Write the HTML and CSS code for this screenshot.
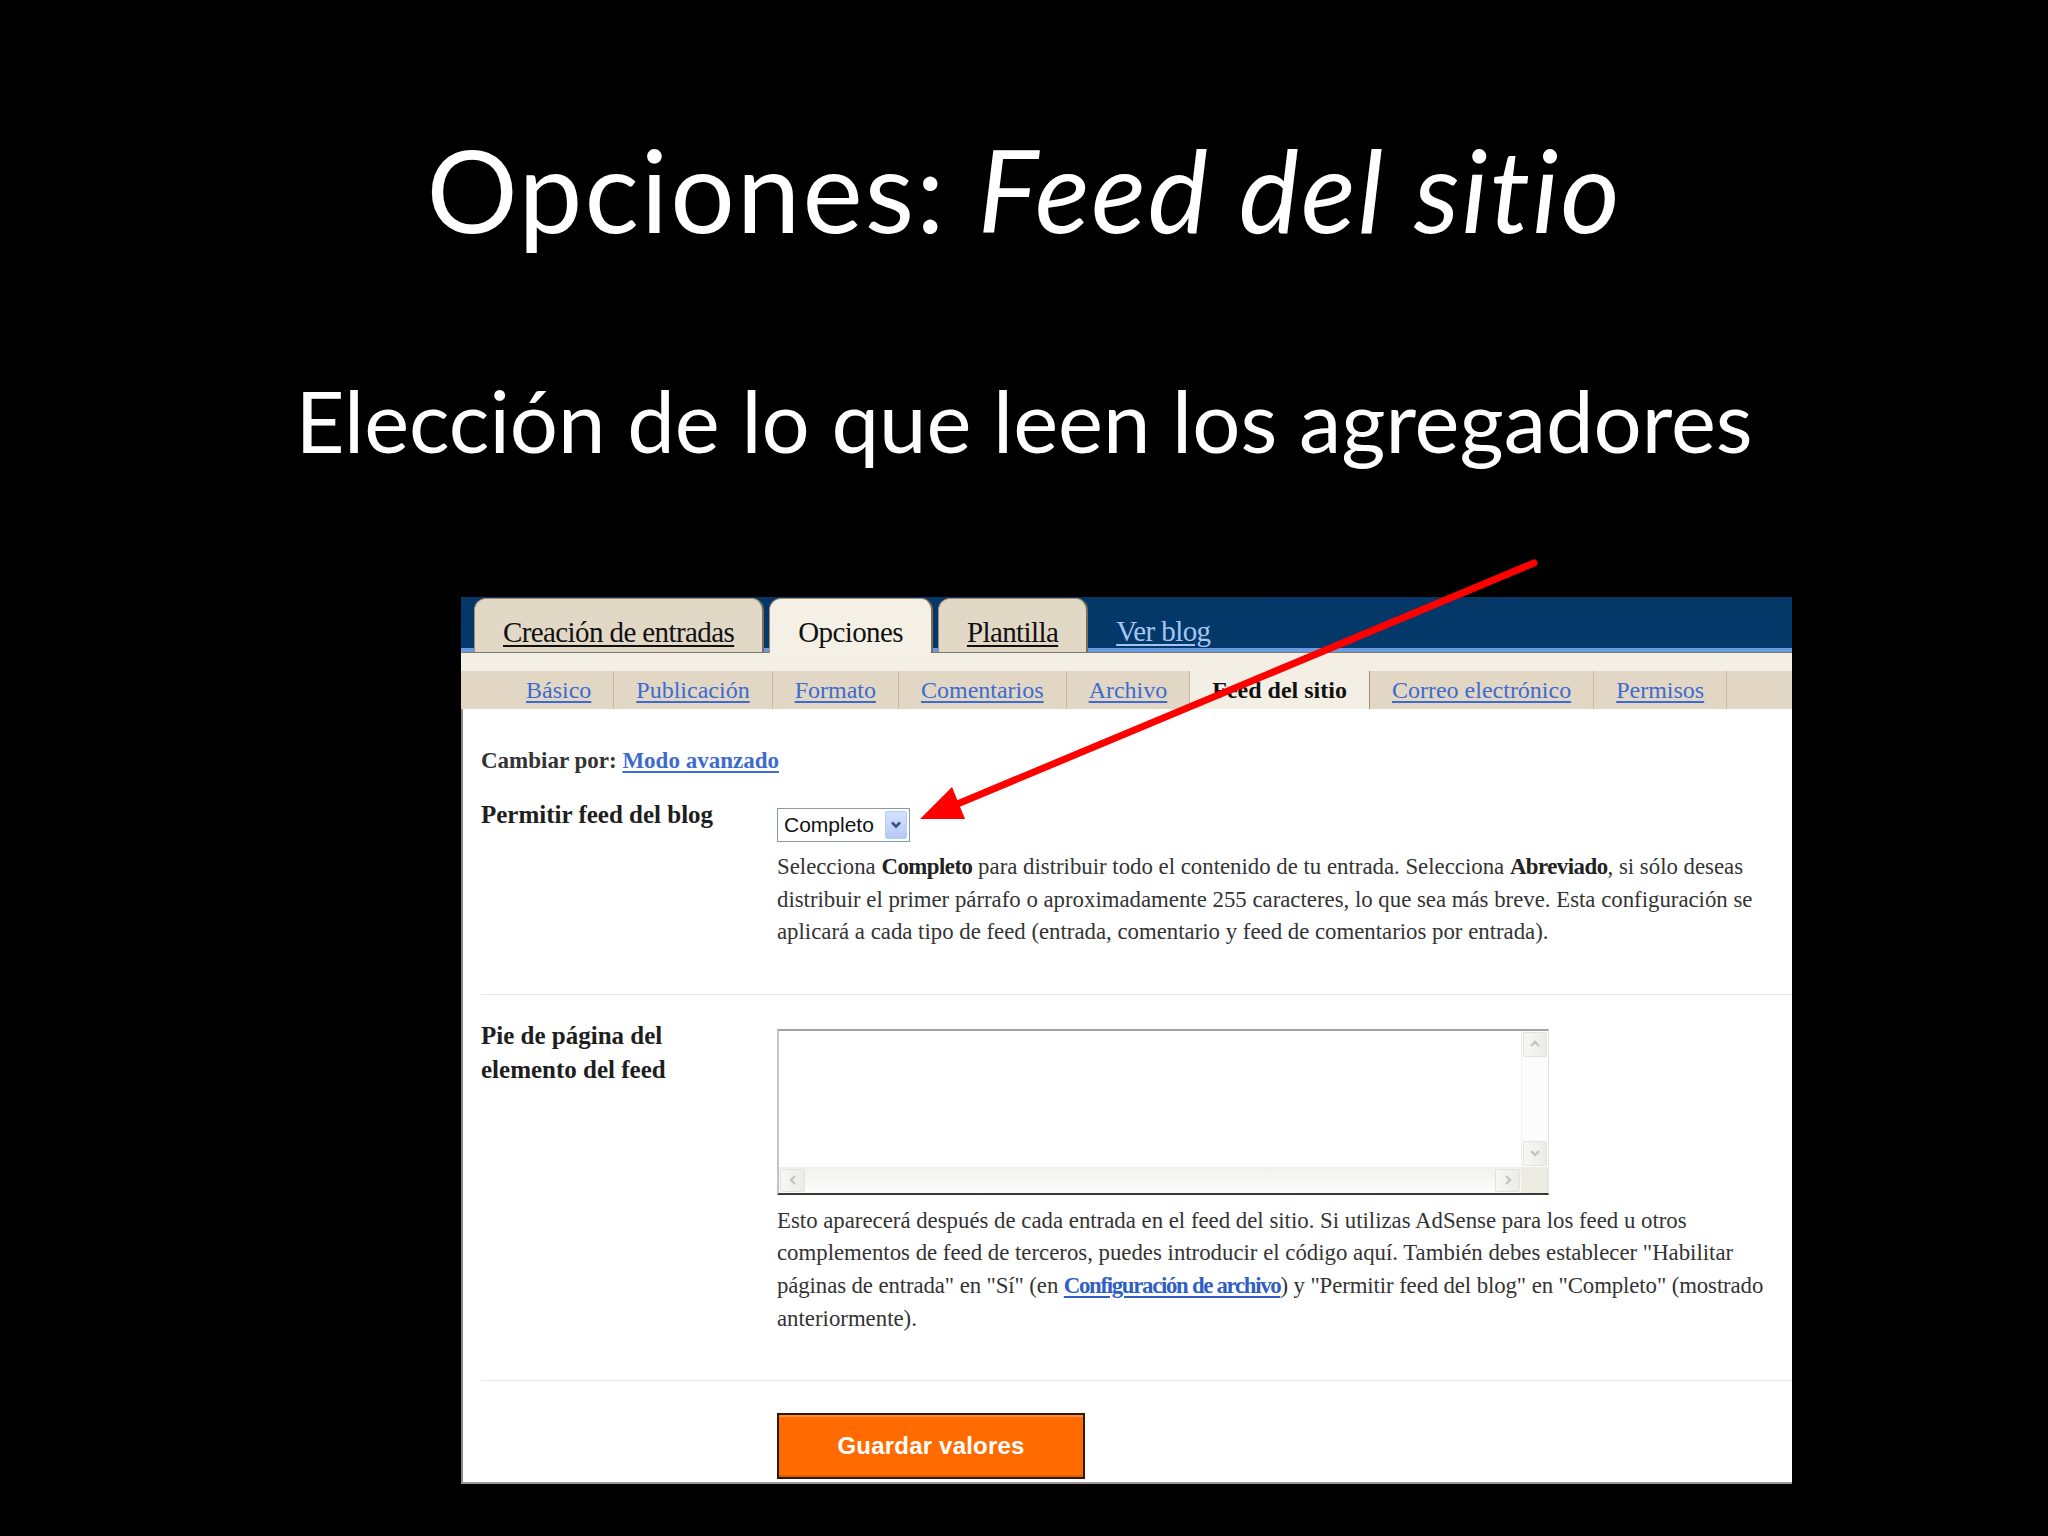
FILE: index.html
```html
<!DOCTYPE html>
<html lang="es">
<head>
<meta charset="utf-8">
<title>Opciones: Feed del sitio</title>
<link rel="stylesheet" href="styles.css">
</head>
<body>
<div class="slide">
  <h1 class="title">Opciones: <em>Feed del sitio</em></h1>
  <p class="subtitle">Elección de lo que leen los agregadores</p>

  <div class="shot">
    <div class="topbar">
      <a class="tab">Creación de entradas</a>
      <span class="tab active">Opciones</span>
      <a class="tab">Plantilla</a>
      <a class="viewblog">Ver blog</a>
    </div>
    <div class="subbar">
      <div class="subtabs">
        <a class="stab">Básico</a>
        <a class="stab">Publicación</a>
        <a class="stab">Formato</a>
        <a class="stab">Comentarios</a>
        <a class="stab">Archivo</a>
        <span class="stab active">Feed del sitio</span>
        <a class="stab">Correo electrónico</a>
        <a class="stab">Permisos</a>
      </div>
    </div>

    <div class="content">
      <p class="switch"><b>Cambiar por:</b> <a>Modo avanzado</a></p>

      <div class="row r1">
        <div class="label">Permitir feed del blog</div>
        <div class="field">
          <div class="select">
            <span class="sel-text">Completo</span>
            <span class="dd"><svg width="14" height="12" viewBox="0 0 14 12"><polyline points="3,3.5 7,7.5 11,3.5" fill="none" stroke="#3f5685" stroke-width="2.8"/></svg></span>
          </div>
          <p class="help">Selecciona <b>Completo</b> para distribuir todo el contenido de tu entrada. Selecciona <b>Abreviado</b>, si sólo deseas<br>distribuir el primer párrafo o aproximadamente 255 caracteres, lo que sea más breve. Esta configuración se<br>aplicará a cada tipo de feed (entrada, comentario y feed de comentarios por entrada).</p>
        </div>
      </div>

      <hr class="sep">

      <div class="row r2">
        <div class="label tall">Pie de página del<br>elemento del feed</div>
        <div class="field">
          <div class="textarea">
            <div class="ta-body"></div>
            <div class="vbar">
              <span class="sbtn"><svg width="14" height="10" viewBox="0 0 14 10"><polyline points="3,7 7,3 11,7" fill="none" stroke="#c4c4c0" stroke-width="2.4"/></svg></span>
              <span class="vtrack"></span>
              <span class="sbtn"><svg width="14" height="10" viewBox="0 0 14 10"><polyline points="3,3 7,7 11,3" fill="none" stroke="#c4c4c0" stroke-width="2.4"/></svg></span>
            </div>
            <div class="hbar">
              <span class="sbtn h"><svg width="10" height="14" viewBox="0 0 10 14"><polyline points="7,3 3,7 7,11" fill="none" stroke="#c4c4c0" stroke-width="2.4"/></svg></span>
              <span class="htrack"></span>
              <span class="sbtn h"><svg width="10" height="14" viewBox="0 0 10 14"><polyline points="3,3 7,7 3,11" fill="none" stroke="#c4c4c0" stroke-width="2.4"/></svg></span>
            </div>
            <div class="corner"></div>
          </div>
          <p class="help h2">Esto aparecerá después de cada entrada en el feed del sitio. Si utilizas AdSense para los feed u otros<br>complementos de feed de terceros, puedes introducir el código aquí. También debes establecer "Habilitar<br><span class="tight">páginas de entrada" en "Sí" (en <a class="blink">Configuración de archivo</a>) y "Permitir feed del blog" en "Completo" (mostrado</span><br>anteriormente).</p>
        </div>
      </div>

      <hr class="sep">

      <div class="actions">
        <button class="save" type="button">Guardar valores</button>
      </div>
    </div>
  </div>

  <svg class="arrow" width="2048" height="1536" viewBox="0 0 2048 1536">
    <line x1="1534" y1="563" x2="955" y2="805" stroke="#ff0000" stroke-width="7" stroke-linecap="round"/>
    <polygon points="920,819 965,819 952,787" fill="#ff0000"/>
  </svg>
</div>
</body>
</html>
```

FILE: styles.css
```css
html, body {
  margin: 0;
  padding: 0;
  background: #000;
}

.slide {
  position: relative;
  width: 2048px;
  height: 1536px;
  background: #000;
  overflow: hidden;
}

.title {
  margin: 0;
  padding-top: 120px;
  font-family: Lato, "Open Sans", sans-serif;
  font-weight: 400;
  font-size: 114px;
  line-height: 137px;
  letter-spacing: 2px;
  font-variant-ligatures: none;
  text-align: center;
  color: #fff;
}

.title em {
  font-style: italic;
}

.subtitle {
  margin: 112px 0 0;
  font-family: Lato, "Open Sans", sans-serif;
  font-size: 85px;
  line-height: 102px;
  font-variant-ligatures: none;
  text-align: center;
  color: #fff;
}

/* ---------- screenshot panel ---------- */
.shot {
  margin-top: 126px;
  margin-left: 461px;
  width: 1331px;
  font-family: "Liberation Serif", "Times New Roman", serif;
}

.topbar {
  display: flex;
  align-items: flex-start;
  height: 56px;
  padding-left: 13px;
  gap: 5px;
  box-sizing: border-box;
  background: linear-gradient(to bottom, #043766 0, #04396b 51px, #6a9be0 51px, #6a9be0 55px, #7d7a72 55px, #7d7a72 56px);
}

.tab {
  margin-top: 1px;
  height: 54px;
  box-sizing: border-box;
  padding: 18px 28px 0;
  border: 1px solid #9b8d77;
  border-right: 2px solid #7a6d5a;
  border-bottom: none;
  border-radius: 12px 12px 0 0;
  background: #e2d8c6;
  font-size: 29px;
  letter-spacing: -0.6px;
  line-height: 30px;
  color: #111;
  text-decoration: underline;
  text-underline-offset: 3px;
}

.tab.active {
  height: 55px;
  background: #f5f0e6;
  text-decoration: none;
  color: #111;
}

.viewblog {
  margin-left: 23px;
  padding-top: 19px;
  font-size: 29px;
  letter-spacing: -0.6px;
  line-height: 30px;
  color: #a3c6f4;
  text-decoration: underline;
  text-underline-offset: 3px;
}

.subbar {
  background: #f4efe4;
  padding-top: 18px;
}

.subtabs {
  display: flex;
  height: 38px;
  padding-left: 43px;
  background: #e1d7c4;
}

.stab {
  padding: 0 22px;
  border-right: 1px solid #c7b99f;
  font-size: 24px;
  line-height: 38px;
  color: #3d6bd0;
  text-decoration: underline;
  text-underline-offset: 3px;
  white-space: nowrap;
}

.stab.active {
  background: #f4efe4;
  border-right: 1px solid #9e8f77;
  font-weight: 700;
  color: #111;
  text-decoration: none;
}

/* ---------- content ---------- */
.content {
  background: #fff;
  border-left: 2px solid #8a8a8a;
  border-bottom: 2px solid #9a9a9a;
  padding: 0 0 3px 18px;
  color: #333;
}

.switch {
  margin: 0;
  padding-top: 37px;
  font-size: 23px;
  line-height: 30px;
  font-weight: 700;
  color: #333;
}

.switch a {
  color: #3d6bd0;
  text-decoration: underline;
  text-underline-offset: 3px;
}

.row {
  display: grid;
  grid-template-columns: 296px 1fr;
}

.r1 {
  margin-top: 24px;
}

.r2 {
  margin-top: 24px;
}

.label {
  font-size: 25px;
  font-weight: 700;
  line-height: 30px;
  color: #1e1e1e;
}

.label.tall {
  line-height: 34px;
}

.select {
  display: flex;
  align-items: center;
  margin-top: 8px;
  width: 133px;
  height: 34px;
  box-sizing: border-box;
  border: 1px solid #7f9db9;
  background: #fff;
  padding-left: 6px;
}

.sel-text {
  font-family: "Liberation Sans", Arial, sans-serif;
  font-size: 21px;
  color: #111;
}

.dd {
  margin-left: auto;
  margin-right: 2px;
  width: 22px;
  height: 28px;
  box-sizing: border-box;
  display: flex;
  align-items: center;
  justify-content: center;
  border: 1px solid #b9cbf3;
  border-radius: 2px;
  background: linear-gradient(to bottom, #d4e0fd, #b6c9f6);
}

.help {
  margin: 9px 0 0;
  padding-bottom: 45px;
  font-size: 22.8px;
  line-height: 32.5px;
  color: #333;
  white-space: nowrap;
}

.help b {
  color: #222;
  letter-spacing: -0.5px;
}

.help.h2 {
  margin-top: 10px;
  line-height: 32.7px;
}

.tight {
  letter-spacing: -0.1px;
}

.blink {
  color: #2f5fc4;
  font-weight: 700;
  letter-spacing: -1.3px;
  text-decoration: underline;
  text-underline-offset: 3px;
}

.sep {
  margin: 0;
  border: 0;
  height: 1px;
  background: #e6e6e6;
}

/* fake textarea */
.textarea {
  margin-top: 10px;
  width: 772px;
  height: 166px;
  box-sizing: border-box;
  display: grid;
  grid-template-columns: 1fr 27px;
  grid-template-rows: 1fr 26px;
  border-top: 2px solid #a2a2a2;
  border-left: 2px solid #c4c4c4;
  border-right: 1px solid #e2e2e2;
  border-bottom: 2px solid #383838;
  background: #fff;
}

.ta-body {
  background: #fff;
}

.vbar {
  display: flex;
  flex-direction: column;
  background: #fcfcfc;
  border-left: 1px solid #f0f0f0;
}

.vtrack {
  flex: 1;
}

.hbar {
  display: flex;
  background: linear-gradient(to bottom, #f1f1ef, #fdfdfd);
  border-top: 1px solid #f0f0ee;
}

.htrack {
  flex: 1;
}

.sbtn {
  display: flex;
  align-items: center;
  justify-content: center;
  height: 25px;
  margin: 1px;
  box-sizing: border-box;
  border: 1px solid #e2e2de;
  border-radius: 2px;
  background: linear-gradient(to right, #f7f7f5, #ebebe7);
}

.sbtn.h {
  width: 25px;
  height: auto;
}

.corner {
  background: #ecebe2;
}

.actions {
  margin-top: 32px;
  padding-left: 296px;
}

.save {
  display: block;
  width: 308px;
  height: 66px;
  margin: 0;
  padding: 0;
  box-sizing: border-box;
  border: 2px solid #2b1a0c;
  background: #ff6b00;
  box-shadow: inset 0 2px 0 #ff8a33, inset 0 -2px 0 #e05e00;
  font-family: "Liberation Sans", Arial, sans-serif;
  font-size: 24px;
  font-weight: 700;
  color: #fff;
  letter-spacing: 0.2px;
}

.arrow {
  position: absolute;
  top: 0;
  left: 0;
  pointer-events: none;
}
```
